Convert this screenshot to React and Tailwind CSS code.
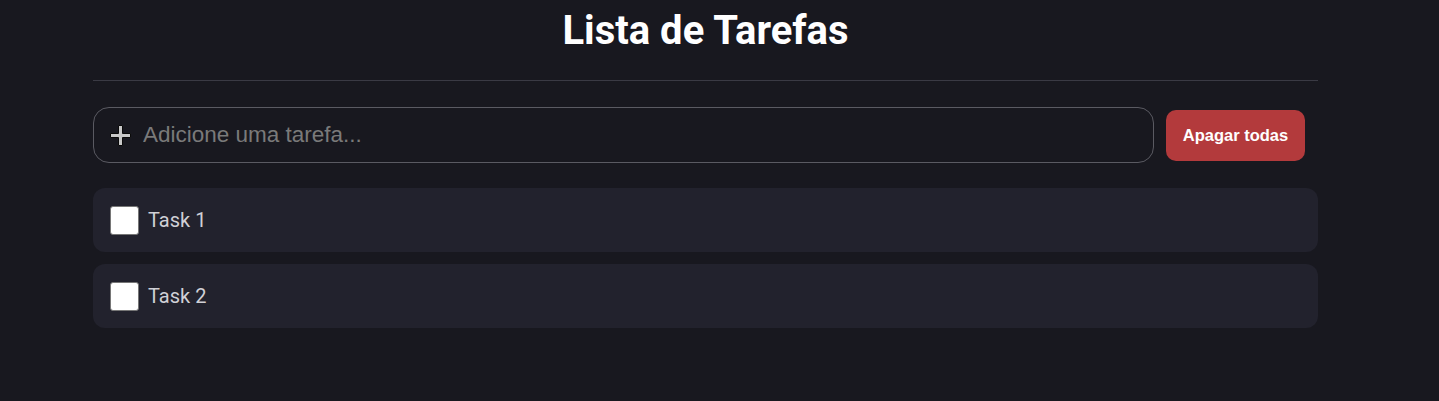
import { useState } from "react";

const PlusIcon = () => (
  <svg width="23" height="23" viewBox="0 0 23 23" className="shrink-0">
    <path
      d="M9.5 1.5h4v8h8v4h-8v8h-4v-8h-8v-4h8z"
      fill="#c9c9c9"
      stroke="#0a0a0a"
      strokeWidth="1"
    />
  </svg>
);

const App = () => {
  const [tasks, setTasks] = useState([
    { id: 1, text: "Task 1", done: false },
    { id: 2, text: "Task 2", done: false },
  ]);
  const [value, setValue] = useState("");

  const toggle = (id) =>
    setTasks(tasks.map((t) => (t.id === id ? { ...t, done: !t.done } : t)));

  return (
    <div className="min-h-[401px] bg-[#18181f] font-['Roboto',sans-serif]">
      <div className="w-[1225px] ml-[93px]">
        <h1 className="text-center text-white font-bold text-[40px] leading-[48px] pt-[7px] pb-[25px]">
          Lista de Tarefas
        </h1>
        <div className="h-px bg-[#3a3a44]" />

        <div className="flex items-center gap-3 mt-[26px] mb-[25px] pr-[13px]">
          <div className="flex-1 h-[56px] flex items-center gap-[11px] border border-[#5a5a62] rounded-[16px] pl-[15px] pr-4">
            <PlusIcon />
            <input
              value={value}
              onChange={(e) => setValue(e.target.value)}
              placeholder="Adicione uma tarefa..."
              className="flex-1 bg-transparent outline-none text-[22.5px] text-white placeholder:text-[#7a7a7a] font-['Liberation_Sans',sans-serif]"
            />
          </div>
          <button className="w-[139px] h-[51px] bg-[#b33a3c] rounded-[10px] text-white font-bold text-[16.5px] font-['Liberation_Sans',sans-serif]">
            Apagar todas
          </button>
        </div>

        <div className="flex flex-col gap-3">
          {tasks.map((t) => (
            <div
              key={t.id}
              className="h-[64px] bg-[#22222d] rounded-[12px] flex items-center px-[17px] gap-[9px]"
            >
              <input
                type="checkbox"
                checked={t.done}
                onChange={() => toggle(t.id)}
                className="appearance-none w-[29px] h-[29px] bg-white border border-[#767676] rounded-[3px] checked:bg-[#3b82f6]"
              />
              <span className="text-[20px] text-[#d0d0d6]">{t.text}</span>
            </div>
          ))}
        </div>
      </div>
    </div>
  );
};

export default App;
